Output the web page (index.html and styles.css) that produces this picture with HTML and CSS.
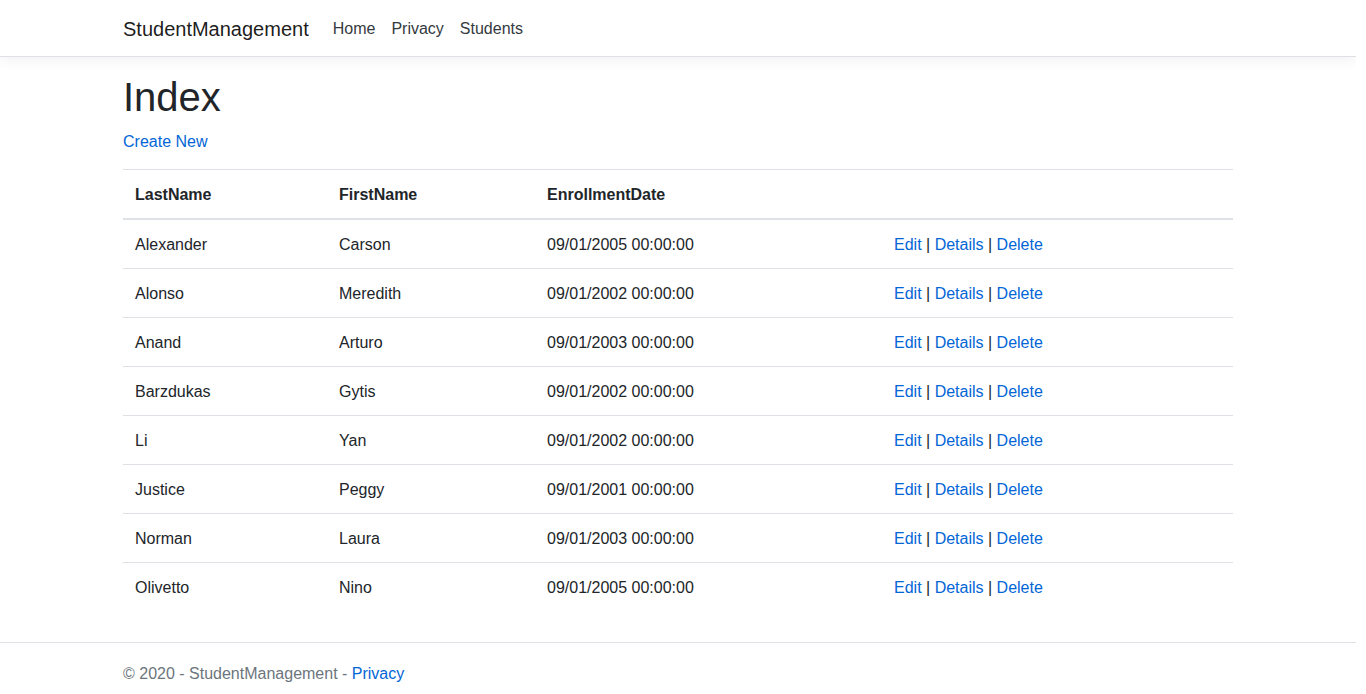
FILE: index.html
```html
<!DOCTYPE html>
<html lang="en">
<head>
<meta charset="utf-8">
<title>Index - StudentManagement</title>
<link rel="stylesheet" href="styles.css">
</head>
<body>
<header>
  <nav class="navbar">
    <div class="container nav-inner">
      <a class="brand" href="#">StudentManagement</a>
      <ul class="nav-links">
        <li><a class="nav-link" href="#">Home</a></li>
        <li><a class="nav-link" href="#">Privacy</a></li>
        <li><a class="nav-link" href="#">Students</a></li>
      </ul>
    </div>
  </nav>
</header>
<div class="container">
  <main class="main">
    <h1 class="title">Index</h1>
    <p class="create"><a href="#">Create New</a></p>
    <table class="table">
      <thead>
        <tr>
          <th class="c1">LastName</th>
          <th class="c2">FirstName</th>
          <th class="c3">EnrollmentDate</th>
          <th class="c4"></th>
        </tr>
      </thead>
      <tbody>
        <tr><td>Alexander</td><td>Carson</td><td>09/01/2005 00:00:00</td><td><a href="#">Edit</a> | <a href="#">Details</a> | <a href="#">Delete</a></td></tr>
        <tr><td>Alonso</td><td>Meredith</td><td>09/01/2002 00:00:00</td><td><a href="#">Edit</a> | <a href="#">Details</a> | <a href="#">Delete</a></td></tr>
        <tr><td>Anand</td><td>Arturo</td><td>09/01/2003 00:00:00</td><td><a href="#">Edit</a> | <a href="#">Details</a> | <a href="#">Delete</a></td></tr>
        <tr><td>Barzdukas</td><td>Gytis</td><td>09/01/2002 00:00:00</td><td><a href="#">Edit</a> | <a href="#">Details</a> | <a href="#">Delete</a></td></tr>
        <tr><td>Li</td><td>Yan</td><td>09/01/2002 00:00:00</td><td><a href="#">Edit</a> | <a href="#">Details</a> | <a href="#">Delete</a></td></tr>
        <tr><td>Justice</td><td>Peggy</td><td>09/01/2001 00:00:00</td><td><a href="#">Edit</a> | <a href="#">Details</a> | <a href="#">Delete</a></td></tr>
        <tr><td>Norman</td><td>Laura</td><td>09/01/2003 00:00:00</td><td><a href="#">Edit</a> | <a href="#">Details</a> | <a href="#">Delete</a></td></tr>
        <tr><td>Olivetto</td><td>Nino</td><td>09/01/2005 00:00:00</td><td><a href="#">Edit</a> | <a href="#">Details</a> | <a href="#">Delete</a></td></tr>
      </tbody>
    </table>
  </main>
</div>
<footer class="footer">
  <div class="container footer-inner">
    &copy; 2020 - StudentManagement - <a href="#">Privacy</a>
  </div>
</footer>
</body>
</html>
```
FILE: styles.css
```css
html {
  position: relative;
  min-height: 100%;
  max-width: 1356px;
}
*, *::before, *::after {
  box-sizing: border-box;
}
body {
  margin: 0 0 60px 0;
  font-family: "Liberation Sans", Arial, sans-serif;
  font-size: 16px;
  line-height: 1.5;
  color: #212529;
  background: #fff;
}
a {
  color: #0366d6;
  text-decoration: none;
}
.container {
  width: 100%;
  max-width: 1140px;
  padding: 0 15px;
  margin: 0 auto;
}
.navbar {
  background: #fff;
  border-bottom: 1px solid #dee2e6;
  box-shadow: 0 4px 12px rgba(0, 0, 0, 0.05);
  padding: 8px 0;
  margin-bottom: 16px;
}
.nav-inner {
  display: flex;
  align-items: center;
}
.brand {
  font-size: 20px;
  line-height: 30px;
  padding: 6px 0 4px;
  margin-right: 16px;
  color: rgba(0, 0, 0, 0.9);
  white-space: nowrap;
}
.nav-links {
  display: flex;
  list-style: none;
  margin: 0;
  padding: 0;
}
.nav-link {
  display: block;
  padding: 9px 8px 7px;
  color: #343a40;
}
.main {
  padding-bottom: 16px;
}
.title {
  font-size: 40px;
  font-weight: 500;
  line-height: 1.2;
  margin: 0 0 8px 0;
}
.create {
  margin: 0 0 15px 0;
  padding-top: 1px;
}
.table {
  width: 100%;
  border-collapse: collapse;
  margin-bottom: 16px;
}
.table th,
.table td {
  padding: 13px 12px 11px;
  text-align: left;
  vertical-align: top;
  border-top: 1px solid #dee2e6;
}
.table thead th {
  font-weight: 700;
  vertical-align: bottom;
  border-bottom: 2px solid #dee2e6;
}
.c1 { width: 204px; }
.c2 { width: 208px; }
.c3 { width: 347px; }
.c4 { width: 351px; }
.footer {
  position: absolute;
  bottom: 0;
  width: 100%;
  line-height: 58px;
  padding-top: 2px;
  white-space: nowrap;
  border-top: 1px solid #dee2e6;
  color: #6c757d;
}
```
